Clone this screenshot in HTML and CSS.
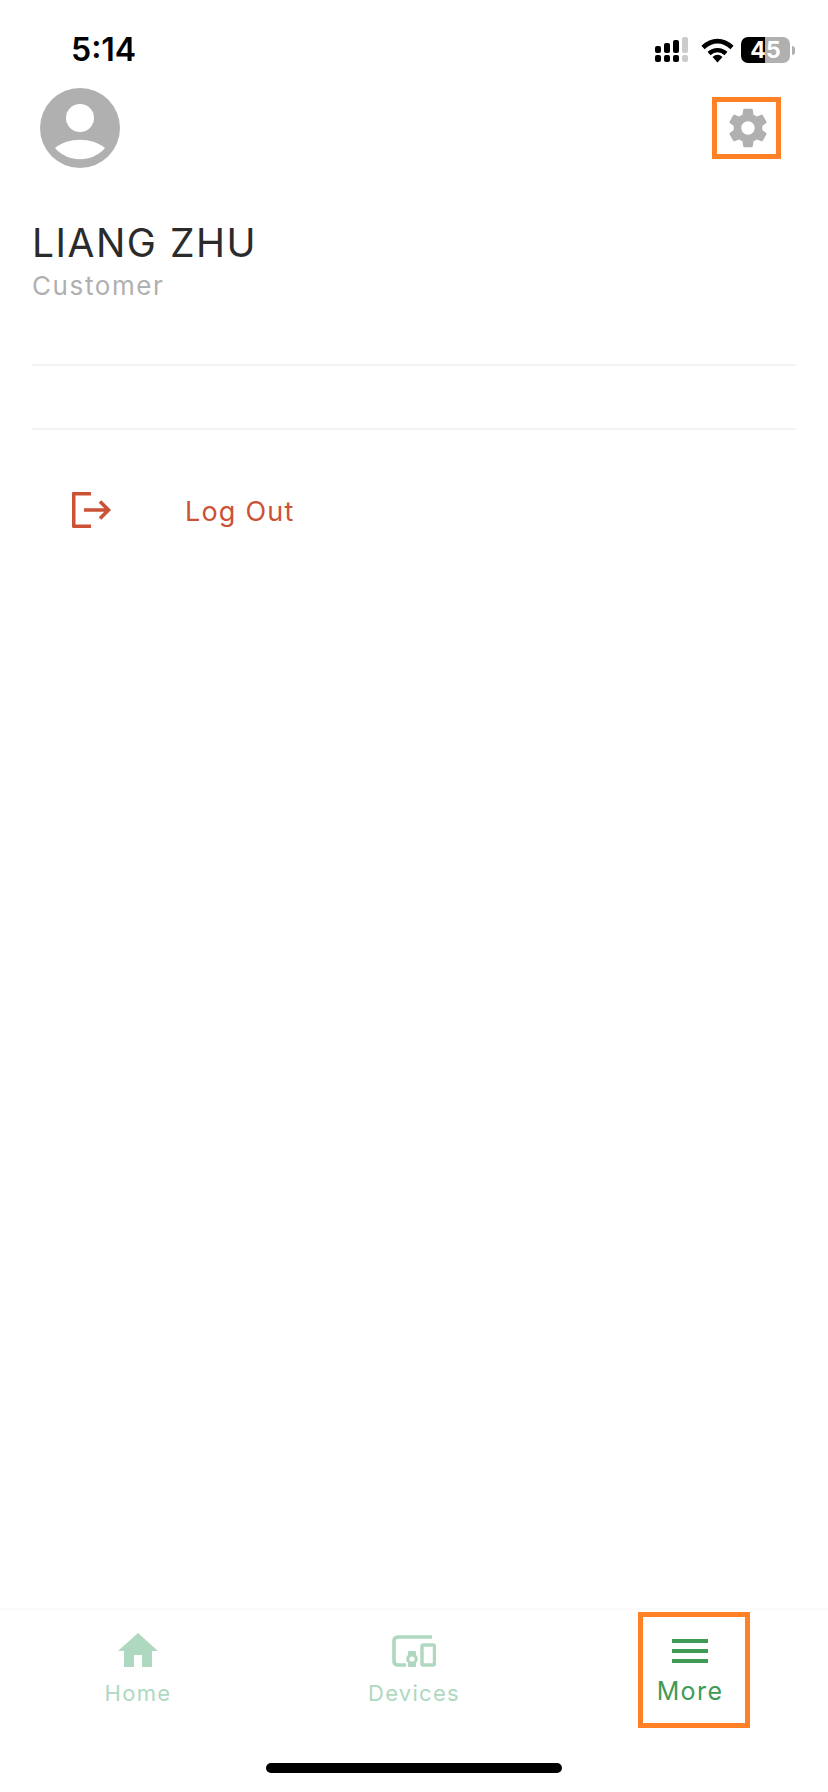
FILE: index.html
```html
<!DOCTYPE html>
<html lang="en">
<head>
  <meta charset="UTF-8">
  <title>More</title>
  <link rel="stylesheet" href="styles.css">
</head>
<body>
  <div class="screen">

    <div class="status-bar">
      <span class="time">5:14</span>
      <div class="status-icons">
        <svg class="signal" width="34" height="26" viewBox="0 0 34 26">
          <rect x="0" y="9" width="6" height="7" rx="2" fill="#000"/>
          <rect x="0" y="18" width="6" height="7" rx="2" fill="#000"/>
          <rect x="9" y="6" width="6" height="10" rx="2" fill="#000"/>
          <rect x="9" y="18" width="6" height="7" rx="2" fill="#000"/>
          <rect x="18" y="3" width="6" height="13" rx="2" fill="#000"/>
          <rect x="18" y="18" width="6" height="7" rx="2" fill="#000"/>
          <rect x="27" y="0" width="6" height="16" rx="2" fill="#ccc"/>
          <rect x="27" y="18" width="6" height="7" rx="2" fill="#ccc"/>
        </svg>
        <svg class="wifi" width="33" height="25" viewBox="0 0 33 25">
          <path d="M2 9.5 C11 1 22 1 31 9.5" fill="none" stroke="#000" stroke-width="4.6"/>
          <path d="M8 15.5 C13 11 20 11 25 15.5" fill="none" stroke="#000" stroke-width="4.4"/>
          <path d="M11.5 19 Q16.5 14.5 21.5 19 L16.5 24.5 Z" fill="#000"/>
        </svg>
        <div class="battery"><span>45</span></div>
        <div class="battery-nub"></div>
      </div>
    </div>

    <div class="profile-top">
      <svg class="avatar" width="80" height="80" viewBox="0 0 80 80">
        <circle cx="40" cy="40" r="40" fill="#b0b0b0"/>
        <circle cx="40" cy="30" r="14" fill="#fff"/>
        <path d="M15 60 C28 49 52 49 65 60 C52 75 28 75 15 60 Z" fill="#fff"/>
      </svg>
      <div class="settings-btn">
        <svg width="46" height="46" viewBox="0 0 24 24">
          <path fill="#b0b0b0" d="M19.43 12.98c.04-.32.07-.64.07-.98s-.03-.66-.07-.98l2.11-1.65c.19-.15.24-.42.12-.64l-2-3.46c-.12-.22-.39-.3-.61-.22l-2.49 1c-.52-.4-1.08-.73-1.69-.98l-.38-2.65C14.46 2.18 14.25 2 14 2h-4c-.25 0-.46.18-.49.42l-.38 2.65c-.61.25-1.17.59-1.69.98l-2.49-1c-.23-.09-.49 0-.61.22l-2 3.46c-.13.22-.07.49.12.64l2.11 1.65c-.04.32-.07.65-.07.98s.03.66.07.98l-2.11 1.65c-.19.15-.24.42-.12.64l2 3.46c.12.22.39.3.61.22l2.49-1c.52.4 1.08.73 1.69.98l.38 2.65c.03.24.24.42.49.42h4c.25 0 .46-.18.49-.42l.38-2.65c.61-.25 1.17-.59 1.69-.98l2.49 1c.23.09.49 0 .61-.22l2-3.46c.12-.22.07-.49-.12-.64l-2.11-1.65zM12 15.5c-1.93 0-3.5-1.57-3.5-3.5s1.57-3.5 3.5-3.5 3.5 1.57 3.5 3.5-1.57 3.5-3.5 3.5z"/>
        </svg>
      </div>
    </div>

    <div class="user-info">
      <div class="user-name">LIANG ZHU</div>
      <div class="user-role">Customer</div>
    </div>

    <div class="divider first"></div>
    <div class="divider second"></div>

    <div class="logout">
      <svg class="logout-icon" width="40" height="36" viewBox="0 0 40 36">
        <path d="M19 1.7 H1.7 V34.3 H19" fill="none" stroke="#cc5236" stroke-width="3.6" stroke-linejoin="round"/>
        <path d="M12 18 H36 M28 9.5 L36.5 18 L28 26.5" fill="none" stroke="#cc5236" stroke-width="3.6"/>
      </svg>
      <span class="logout-label">Log Out</span>
    </div>

    <div class="spacer"></div>

    <div class="tab-bar">
      <div class="tab">
        <svg width="40" height="34" viewBox="0 0 40 34">
          <path d="M20 0 L40 18 H34 V34 H24 V22 H16 V34 H6 V18 H0 Z" fill="#aed8bf"/>
        </svg>
        <span class="tab-label">Home</span>
      </div>
      <div class="tab">
        <svg width="44" height="34" viewBox="0 -2 44 34">
          <path d="M40 2 H6 Q2 2 2 6 V26 Q2 30 6 30 H14" fill="none" stroke="#aed8bf" stroke-width="3.6"/>
          <rect x="30" y="10" width="12.5" height="20" rx="1.5" fill="none" stroke="#aed8bf" stroke-width="3.4"/>
          <rect x="16" y="16" width="8" height="16" rx="1" fill="#aed8bf"/>
          <circle cx="20" cy="24" r="5.8" fill="#aed8bf"/>
          <circle cx="20" cy="24" r="2.6" fill="#fff"/>
        </svg>
        <span class="tab-label">Devices</span>
      </div>
      <div class="tab active">
        <div class="menu-icon"><i></i><i></i><i></i></div>
        <span class="tab-label">More</span>
        <div class="tab-highlight"></div>
      </div>
    </div>

    <div class="home-bar-wrap"><div class="home-bar"></div></div>

  </div>
</body>
</html>
```

FILE: styles.css
```css
* {
  box-sizing: border-box;
}

html, body {
  margin: 0;
  padding: 0;
  background: #fff;
}

body {
  font-family: Inter, "Liberation Sans", sans-serif;
}

.screen {
  width: 828px;
  height: 1792px;
  display: flex;
  flex-direction: column;
  overflow: hidden;
}

/* status bar */
.status-bar {
  height: 88px;
  display: flex;
  justify-content: space-between;
  align-items: flex-start;
  padding: 31px 33px 0 71px;
}

.time {
  font-size: 32px;
  line-height: 38px;
  font-weight: 600;
  color: #000;
}

.status-icons {
  display: flex;
  align-items: center;
  padding-top: 6px;
}

.signal {
  margin-right: 12px;
}

.wifi {
  margin-right: 7px;
}

.battery {
  width: 49px;
  height: 26px;
  border-radius: 7px;
  background: linear-gradient(to right, #000 50%, #b0b0b0 50%);
  color: #fff;
  font-size: 23px;
  line-height: 26px;
  font-weight: 700;
  text-align: center;
}

.battery-nub {
  width: 3px;
  height: 9px;
  margin-left: 2px;
  border-radius: 0 3px 3px 0;
  background: #b0b0b0;
}

/* profile */
.profile-top {
  height: 80px;
  display: flex;
  justify-content: space-between;
  align-items: center;
  padding: 0 47px 0 40px;
}

.settings-btn {
  width: 69px;
  height: 62px;
  padding-left: 3px;
  border: 5px solid #ff8025;
  display: flex;
  align-items: center;
  justify-content: center;
}

.user-info {
  padding: 52px 32px 0 32px;
}

.user-name {
  font-size: 39px;
  line-height: 46px;
  letter-spacing: 1.5px;
  color: #2b2b2b;
}

.user-role {
  margin-top: 5px;
  font-size: 26px;
  line-height: 30px;
  letter-spacing: 1.6px;
  color: #b0b0b0;
}

.divider {
  height: 2px;
  margin: 0 32px;
  background: #f3f3f3;
}

.divider.first {
  margin-top: 63px;
}

.divider.second {
  margin-top: 62px;
}

.logout {
  display: flex;
  align-items: center;
  padding: 62px 0 0 72px;
}

.logout-label {
  margin-left: 73px;
  padding-top: 3px;
  font-size: 27px;
  letter-spacing: 1.2px;
  color: #cc5236;
}

.spacer {
  flex: 1;
}

/* bottom tabs */
.tab-bar {
  height: 121px;
  display: flex;
  border-top: 3px solid #fbfbfb;
}

.tab {
  position: relative;
  flex: 1;
  display: flex;
  flex-direction: column;
  align-items: center;
  padding-top: 22px;
}

.tab-label {
  margin-top: 13px;
  font-size: 22px;
  line-height: 26px;
  letter-spacing: 1.3px;
  color: #aed8bf;
}

.tab.active .tab-label {
  margin-top: 11px;
  font-size: 25px;
  letter-spacing: 1.4px;
  color: #3f9a56;
}

.menu-icon {
  width: 36px;
  height: 34px;
  display: flex;
  flex-direction: column;
  gap: 6px;
  padding-top: 6px;
}

.menu-icon i {
  display: block;
  height: 4px;
  background: #3f9a56;
}

.tab-highlight {
  position: absolute;
  top: 1px;
  left: 86px;
  width: 112px;
  height: 116px;
  border: 5px solid #ff8025;
}

.home-bar-wrap {
  height: 63px;
  display: flex;
  justify-content: center;
  padding-top: 34px;
}

.home-bar {
  width: 296px;
  height: 10px;
  border-radius: 5px;
  background: #000;
}
```
